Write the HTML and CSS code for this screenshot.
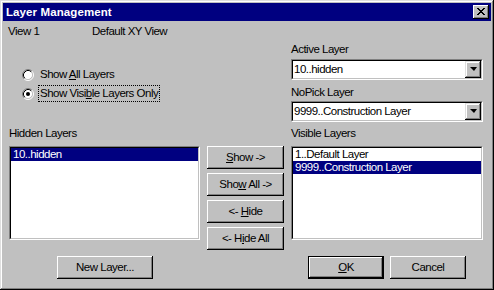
FILE: index.html
```html
<!DOCTYPE html>
<html>
<head>
<meta charset="utf-8">
<link rel="stylesheet" href="styles.css">
</head>
<body>
<div class="window">
  <div class="titlebar">
    <span class="title">Layer Management</span>
    <div class="close-btn">
      <svg width="8" height="7" viewBox="0 0 8 7" shape-rendering="crispEdges"><path d="M0 0h2v1H0zM6 0h2v1H6zM1 1h2v1H1zM5 1h2v1H5zM2 2h4v1H2zM3 3h2v1H3zM2 4h4v1H2zM1 5h2v1H1zM5 5h2v1H5zM0 6h2v1H0zM6 6h2v1H6z" fill="#000"/></svg>
    </div>
  </div>
  <div class="content">
    <div class="top-left">
      <div class="view-row"><span class="view-name">View 1</span><span>Default XY View</span></div>
      <div class="radios">
        <div class="radio-row">
          <svg class="radio" width="12" height="12" viewBox="0 0 12 12">
            <circle cx="6" cy="6" r="4.5" fill="#fff"/>
            <path d="M2.11 9.89A5.5 5.5 0 0 1 9.89 2.11" fill="none" stroke="#808080"/>
            <path d="M9.89 2.11A5.5 5.5 0 0 1 2.11 9.89" fill="none" stroke="#fff"/>
            <path d="M2.82 9.18A4.5 4.5 0 0 1 9.18 2.82" fill="none" stroke="#000"/>
            <path d="M9.18 2.82A4.5 4.5 0 0 1 2.82 9.18" fill="none" stroke="#c0c0c0"/>
          </svg>
          <span class="radio-label">Show <u>A</u>ll Layers</span>
        </div>
        <div class="radio-row">
          <svg class="radio" width="12" height="12" viewBox="0 0 12 12">
            <circle cx="6" cy="6" r="4.5" fill="#fff"/>
            <path d="M2.11 9.89A5.5 5.5 0 0 1 9.89 2.11" fill="none" stroke="#808080"/>
            <path d="M9.89 2.11A5.5 5.5 0 0 1 2.11 9.89" fill="none" stroke="#fff"/>
            <path d="M2.82 9.18A4.5 4.5 0 0 1 9.18 2.82" fill="none" stroke="#000"/>
            <path d="M9.18 2.82A4.5 4.5 0 0 1 2.82 9.18" fill="none" stroke="#c0c0c0"/>
            <circle cx="6" cy="6" r="2" fill="#000"/>
          </svg>
          <span class="radio-label focused">Show Visi<u>b</u>le Layers Only</span>
        </div>
      </div>
    </div>
    <div class="top-right">
      <div class="label">Active Layer</div>
      <div class="combo">
        <div class="field-inner">
          <span class="combo-text">10..hidden</span>
          <div class="drop-btn"><span class="arrow"></span></div>
        </div>
      </div>
      <div class="label label-second">NoPick Layer</div>
      <div class="combo combo-second">
        <div class="field-inner">
          <span class="combo-text">9999..Construction Layer</span>
          <div class="drop-btn"><span class="arrow"></span></div>
        </div>
      </div>
    </div>
    <div class="label hidden-label">Hidden Layers</div>
    <div class="label visible-label">Visible Layers</div>
    <div class="listbox hidden-list">
      <div class="list-inner">
        <div class="item selected">10..hidden</div>
      </div>
    </div>
    <div class="mid-buttons">
      <div class="btn mid-btn"><span><u>S</u>how -&gt;</span></div>
      <div class="btn mid-btn"><span>Sho<u>w</u> All -&gt;</span></div>
      <div class="btn mid-btn"><span>&lt;- <u>H</u>ide</span></div>
      <div class="btn mid-btn"><span>&lt;- H<u>i</u>de All</span></div>
    </div>
    <div class="listbox visible-list">
      <div class="list-inner">
        <div class="item">1..Default Layer</div>
        <div class="item selected">9999..Construction Layer</div>
      </div>
    </div>
    <div class="bottom-row">
      <div class="btn new-btn"><span>New Layer...</span></div>
      <div class="btn ok-btn default"><span><u>O</u>K</span></div>
      <div class="btn cancel-btn"><span>Cancel</span></div>
    </div>
  </div>
</div>
</body>
</html>
```
FILE: styles.css
```css
html, body {
  margin: 0;
  padding: 0;
  background: #c0c0c0;
}
body {
  font-family: "Liberation Sans", Arial, sans-serif;
  font-size: 11.5px;
  letter-spacing: -0.5px;
  line-height: 13px;
  color: #000;
}
.window {
  width: 494px;
  height: 290px;
  box-sizing: border-box;
  background: #c0c0c0;
  padding: 3px;
  box-shadow: inset -1px -1px #000, inset 1px 1px #dfdfdf, inset -2px -2px #808080, inset 2px 2px #fff;
}
.titlebar {
  height: 18px;
  background: #000080;
  color: #fff;
  display: flex;
  align-items: center;
  padding: 0 2px 0 3px;
}
.title {
  font-weight: bold;
  font-size: 11.5px;
  letter-spacing: 0.1px;
}
.close-btn {
  margin-left: auto;
  width: 16px;
  height: 14px;
  box-sizing: border-box;
  background: #c0c0c0;
  box-shadow: inset -1px -1px #000, inset 1px 1px #fff, inset -2px -2px #808080;
  display: flex;
  align-items: center;
  justify-content: center;
  padding: 0 1px 1px 0;
}
.close-btn svg { display: block; }
.content {
  display: grid;
  grid-template-columns: 191px 77px 192px;
  grid-template-rows: 106px 19px 94px 16px 23px;
  column-gap: 7px;
  padding-left: 6px;
}
.top-left {
  grid-column: 1 / 3;
  grid-row: 1;
  padding-top: 4px;
}
.view-row {
  display: flex;
  margin-left: -1px;
}
.view-name {
  width: 84px;
}
.radios {
  margin-top: 27px;
  padding-left: 13px;
}
.radio-row {
  height: 19px;
  display: flex;
  align-items: center;
}
.radio {
  display: block;
  flex: none;
}
.radio-label {
  margin-left: 4px;
  padding: 1px 1px;
  border: 1px dotted transparent;
}
.radio-label.focused {
  border-color: #000;
}
.top-right {
  grid-column: 3;
  grid-row: 1;
  padding-top: 22px;
}
.label {
  height: 13px;
}
.top-right .label { margin-bottom: 3px; }
.top-right .label-second { margin-top: 6px; margin-bottom: 2px; }
.combo {
  height: 21px;
  box-sizing: border-box;
  border: 1px solid;
  border-color: #808080 #fff #fff #808080;
}
.field-inner {
  height: 100%;
  box-sizing: border-box;
  border: 1px solid;
  border-color: #000 #c0c0c0 #c0c0c0 #000;
  background: #fff;
  display: flex;
  align-items: center;
}
.combo-text {
  padding-left: 1px;
  flex: 1;
}
.drop-btn {
  width: 16px;
  height: 17px;
  box-sizing: border-box;
  background: #c0c0c0;
  box-shadow: inset -1px -1px #000, inset 1px 1px #dfdfdf, inset -2px -2px #808080, inset 2px 2px #fff;
  display: flex;
  align-items: center;
  justify-content: center;
  padding-bottom: 1px;
}
.arrow {
  width: 0;
  height: 0;
  border-left: 4px solid transparent;
  border-right: 3px solid transparent;
  border-top: 4px solid #000;
}
.hidden-label {
  grid-column: 1;
  grid-row: 2;
}
.visible-label {
  grid-column: 3;
  grid-row: 2;
}
.listbox {
  box-sizing: border-box;
  border: 1px solid;
  border-color: #808080 #fff #fff #808080;
  height: 94px;
}
.list-inner {
  height: 100%;
  box-sizing: border-box;
  border: 1px solid;
  border-color: #000 #c0c0c0 #c0c0c0 #000;
  background: #fff;
}
.hidden-list { grid-column: 1; grid-row: 3; }
.visible-list { grid-column: 3; grid-row: 3; }
.item {
  height: 13px;
  padding-left: 2px;
  white-space: nowrap;
}
.item.selected {
  background: #000080;
  color: #fff;
}
.mid-buttons {
  grid-column: 2;
  grid-row: 3 / 5;
  display: flex;
  flex-direction: column;
  gap: 4px;
}
.btn {
  height: 23px;
  box-sizing: border-box;
  background: #c0c0c0;
  box-shadow: inset -1px -1px #000, inset 1px 1px #fff, inset -2px -2px #808080;
  display: flex;
  align-items: center;
  justify-content: center;
  padding-bottom: 1px;
}
.mid-btn { width: 77px; }
.bottom-row {
  grid-column: 1 / 4;
  grid-row: 5;
  display: flex;
  padding-left: 48px;
  padding-right: 17px;
}
.new-btn { width: 96px; }
.ok-btn {
  width: 76px;
  margin-left: auto;
}
.btn.default {
  border: 1px solid #000;
}
.cancel-btn {
  width: 76px;
  margin-left: 6px;
}
u { text-decoration: underline; text-underline-offset: 1px; }
```
